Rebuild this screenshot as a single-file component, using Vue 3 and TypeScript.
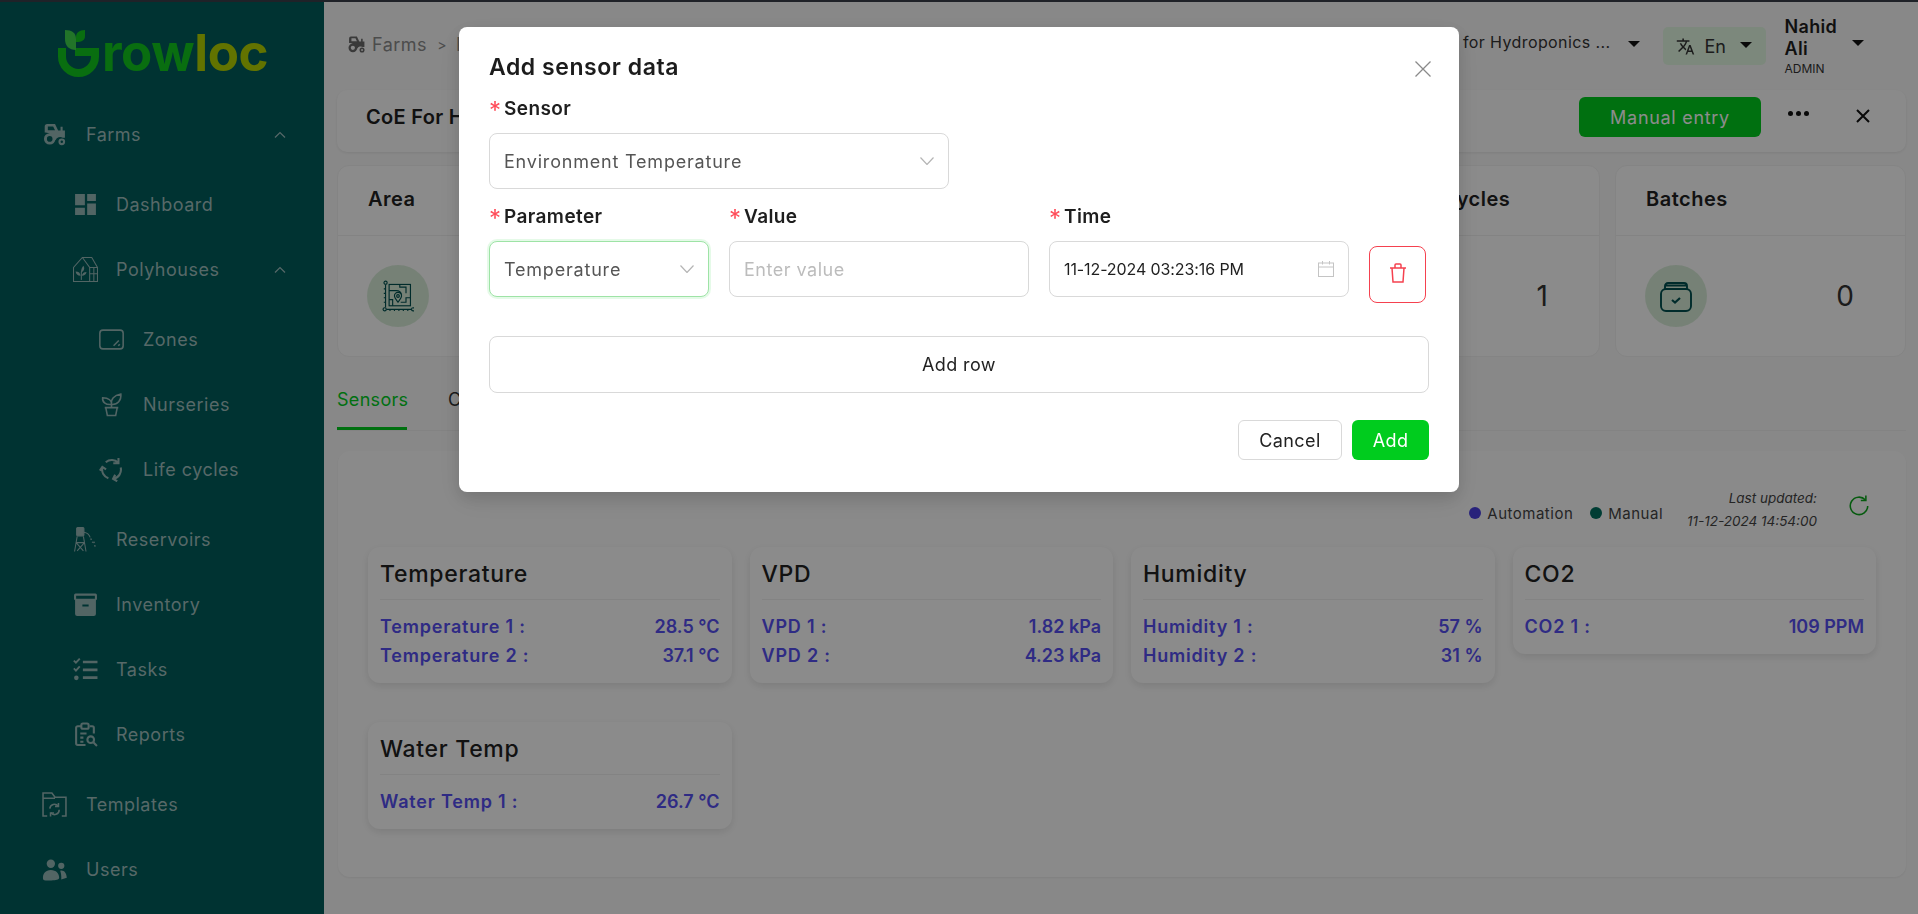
<script setup lang="ts">
interface NavItem {
  label: string
  level: number
  chevron?: boolean
  spaced?: boolean
  icon: string
}

const tractor =
  '<g fill="currentColor"><path d="M5 2h7.5l3 6.2h2.3V4.6h2V8.2h2.2V15h-2.1a5 5 0 0 0-6.9 2.2h-2.2A7.6 7.6 0 0 0 2.6 10V4.4A2.4 2.4 0 0 1 5 2zm.6 2.2V8h6.9l-1.8-3.8z" fill-rule="evenodd"/></g><circle cx="7.4" cy="16.2" r="4.1" fill="none" stroke="currentColor" stroke-width="2.8"/><circle cx="19" cy="19" r="2.2" fill="none" stroke="currentColor" stroke-width="2"/>'

const items: NavItem[] = [
  { label: 'Farms', level: 0, chevron: true, icon: tractor },
  { label: 'Dashboard', level: 1, spaced: true, icon: '<path fill="currentColor" d="M2 12.6h9.4V2H2zM2 22h9.4v-7H2zm11.6 0H22V11h-8.4zm0-20v6.6H22V2z"/>' },
  {
    label: 'Polyhouses',
    level: 1,
    chevron: true,
    icon: '<g fill="none" stroke="currentColor" stroke-width="1"><path d="M.5 23.500V10L9 .5h9l5.500 9.500v13.500z"/><path d="M9 .5l7 9.500v13.500M16 10h7.500M16 16h7.500M20 10v13.500"/></g><g fill="currentColor"><path d="M7.700 15c0-3 1-5 2.300-6.500 1.500 2.500.8 5-2.300 6.500zM7.300 18c-3 0-4.500-1.500-4.800-4 3 0 4.500 1.500 4.800 4zM8.500 18c.3-2 1.700-3.500 4.500-3.500-.5 2.500-2 3.500-4.500 3.500z"/><rect x="7.500" y="14" width="1" height="8"/></g>'
  },
  { label: 'Zones', level: 2, spaced: true, icon: '<g fill="none" stroke="currentColor" stroke-width="1.500"><rect x=".8" y="3" width="22.400" height="18" rx="3"/><path d="M14 18l5-5M18.500 18l1.500-1.500"/></g>' },
  {
    label: 'Nurseries',
    level: 2,
    icon: '<g fill="none" stroke="currentColor" stroke-width="1.500"><path d="M6.500 15h11l-1.500 7.500H8zM5.500 15h13M12 15v-3"/><path d="M12 12c.5-3.500-2.500-6.500-8.500-6.500C3 9.500 6 12.500 12 12zM12 12c-1-5 2.500-9 9-10 .5 6-3 10.500-9 10z"/></g>'
  },
  {
    label: 'Life cycles',
    level: 2,
    icon: '<g fill="none" stroke="currentColor" stroke-width="2"><path d="M6.500 5A9 9 0 0 1 18.500 5.500M18.700 1v5h-5M20.800 10A9 9 0 0 1 14 21M17.500 23.300l-4-2.300 2-4M9 20.500A9 9 0 0 1 3.200 10M.8 13l2.400-3.500L6.800 11.800"/></g>'
  },
  {
    label: 'Reservoirs',
    level: 1,
    spaced: true,
    icon: '<g fill="none" stroke="currentColor" stroke-width="1"><rect x="3.500" y=".5" width="7" height="8" rx="1" fill="currentColor"/><path d="M4 9L1.500 23.500M10 9l2.500 14.500M3 15h8M3 15l7 8M11 15l-7 8M10.500 5c3 .5 5 2 6 5"/><path stroke-dasharray="1.500 2" stroke-width="1.300" d="M17 11l2 4M20 14l1.500 6"/></g>'
  },
  { label: 'Inventory', level: 1, icon: '<path fill="currentColor" d="M2.500 1.500h19A1.500 1.500 0 0 1 23 3v3.500a1.500 1.500 0 0 1-1 1.400V21a2 2 0 0 1-2 2H4a2 2 0 0 1-2-2V7.900a1.500 1.500 0 0 1-1-1.400V3a1.500 1.500 0 0 1 1.500-1.500zM3 3.500v3h18v-3zM9 12v2h6v-2z" fill-rule="evenodd"/>' },
  {
    label: 'Tasks',
    level: 1,
    icon: '<path fill="currentColor" d="M9.500 3.500h14v2.600h-14zM9.500 11h14v2.600h-14zM9.500 18.500h14v2.600h-14z"/><circle cx="3.200" cy="20" r="2.200" fill="currentColor"/><path fill="none" stroke="currentColor" stroke-width="1.800" d="M.8 3.500l2 2L6.500 1.500M.8 11l2 2 3.700-4"/>'
  },
  {
    label: 'Reports',
    level: 1,
    icon: '<g fill="none" stroke="currentColor" stroke-width="2"><path d="M8 4H4.500A1.500 1.500 0 0 0 3 5.500v15A1.500 1.500 0 0 0 4.500 22H12M16 4h2.500A1.500 1.500 0 0 1 20 5.500V11"/><rect x="8" y="1.500" width="7" height="5" rx="1.500"/><path d="M7 11h6M7 15h3M7 19h3"/><circle cx="17" cy="17" r="3.200"/><path d="M19.500 19.500l3.500 3.500"/></g>'
  },
  {
    label: 'Templates',
    level: 0,
    spaced: true,
    icon: '<g fill="none" stroke="currentColor" stroke-width="1.500"><path d="M5 23H1V1h8.500l3 4H23v18h-4M1 6h11.500"/><path d="M7.500 16a4.500 4.500 0 0 1 8-2.500M16.500 17a4.500 4.500 0 0 1-8 3"/><path d="M15.800 10.500v3.300h-3.300M8.200 23.500v-3.300h3.300"/></g>'
  },
  {
    label: 'Users',
    level: 0,
    icon: '<g fill="currentColor"><circle cx="8.500" cy="6.500" r="4"/><circle cx="18.500" cy="8.500" r="3"/><path d="M1 21c-.6-5 2.500-8.500 7.500-8.500s8 3.500 8 7.500c-.2 2-3 2.500-7.500 2.500S1.300 23 1 21z"/><path d="M17.500 13.200c3.500-.800 6 2 6.300 6.800l-5.300 1.500c.2-3-.2-6-1-8.300z"/></g>'
  }
]

const summaryCards = ['Area', 'Polyhouses', 'Zones', 'Total Life cycles', 'Batches']

const sensors = [
  { title: 'Temperature', rows: [['Temperature 1 :', '28.5 °C'], ['Temperature 2 :', '37.1 °C']] },
  { title: 'VPD', rows: [['VPD 1 :', '1.82 kPa'], ['VPD 2 :', '4.23 kPa']] },
  { title: 'Humidity', rows: [['Humidity 1 :', '57 %'], ['Humidity 2 :', '31 %']] },
  { title: 'CO2', rows: [['CO2 1 :', '109 PPM']] },
  { title: 'Water Temp', rows: [['Water Temp 1 :', '26.7 °C']] }
]
</script>

<template>
  <div class="page">
    <aside class="sidebar">
      <div class="logo">
        <svg class="logo-g" viewBox="0 0 41 47">
          <path d="M4 18v8.500a16.500 16.500 0 0 0 33 0V22H17" fill="none" stroke="#12c81e" stroke-width="8" />
          <path d="M7 0c7 0 11 3 11 9v11c-7 0-11-4-11-11z" fill="#3fd34c" />
          <path d="M27 0v6c0 4-3 6-9 6V7c0-4 3-7 9-7z" fill="#12c81e" />
        </svg>
        <span class="logo-text">row<span class="logo-loc">loc</span></span>
      </div>
      <nav class="nav">
        <div v-for="item in items" :key="item.label" class="nav-item" :class="[`level-${item.level}`, { spaced: item.spaced }]">
          <span class="nav-icon"><svg viewBox="0 0 24 24" v-html="item.icon"></svg></span>
          <span class="nav-label">{{ item.label }}</span>
          <svg v-if="item.chevron" class="chev" viewBox="0 0 12 8"><path d="M1 6.500l5-5 5 5" fill="none" stroke="currentColor" stroke-width="1.200" /></svg>
        </div>
      </nav>
    </aside>

    <main class="main">
      <header class="topbar">
        <div class="crumbs">
          <svg class="crumb-icon" viewBox="0 0 24 24" v-html="tractor"></svg>
          <span>Farms</span>
          <span class="sep">&gt;</span>
          <span>Polyhouses</span>
        </div>
        <div class="top-right">
          <span class="farm-name">CoE for Hydroponics ...</span>
          <i class="caret"></i>
          <div class="lang">
            <svg viewBox="0 0 24 24"><path fill="currentColor" d="M12.870 15.070l-2.540-2.510.030-.030c1.740-1.940 2.980-4.170 3.710-6.530H17V4h-7V2H8v2H1v1.990h11.170C11.500 7.920 10.440 9.750 9 11.350 8.070 10.320 7.300 9.190 6.690 8h-2c.730 1.630 1.730 3.170 2.980 4.560l-5.090 5.020L4 19l5-5 3.110 3.110.760-2.040zM18.500 10h-2L12 22h2l1.120-3h4.750L21 22h2l-4.500-12zm-2.620 7l1.620-4.330L19.120 17h-3.240z" /></svg>
            <span>En</span>
            <i class="caret"></i>
          </div>
          <div class="user">
            <div class="user-name">Nahid<br />Ali</div>
            <div class="user-role">ADMIN</div>
          </div>
          <i class="caret user-caret"></i>
        </div>
      </header>

      <section class="titlebar">
        <h1>CoE For Hydroponics</h1>
        <button class="manual">Manual entry</button>
        <span class="dots"><i></i><i></i><i></i></span>
        <svg class="bar-close" viewBox="0 0 16 16"><path d="M2 2l12 12M14 2L2 14" stroke="currentColor" stroke-width="2" /></svg>
      </section>

      <section class="summary">
        <div v-for="(card, i) in summaryCards" :key="card" class="summary-card">
          <div class="summary-head">{{ card }}</div>
          <div class="summary-body">
            <span class="round">
              <svg v-if="card === 'Batches'" viewBox="0 0 32 32" fill="none" stroke="#004f4f" stroke-width="1.900"><rect x="1" y="9" width="30" height="22" rx="5" /><path d="M5 9V6a3 3 0 0 1 3-3h16a3 3 0 0 1 3 3v3M5 5.500h22" /><path d="M12 20l3 2.500 5-4.500" stroke-width="2.200" /></svg>
              <svg v-else viewBox="0 0 36 36" fill="none" stroke="#004f4f" stroke-width="1.300"><circle cx="4" cy="3" r="1.800" /><circle cx="3" cy="33" r="1.800" /><circle cx="35" cy="33" r="1.800" /><path d="M4 5v26M5 33h28" /><path d="M2 10h2M2 15h2M2 20h2M2 25h2M9 35v-2M14 35v-2M19 35v-2M24 35v-2M29 35v-2" /><rect x="8" y="5" width="24" height="24" /><path d="M8 12h8a6 6 0 0 1 6 5M20 5v3h7v7M32 20h-5v5h-6M8 22h4v7" /><path d="M18 25c-3-4-4-5-4-7a4 4 0 0 1 8 0c0 2-1 3-4 7z" fill="#d8ecd8" /><circle cx="18" cy="18" r="1.500" /></svg>
            </span>
            <span class="summary-value">{{ i === 4 ? 0 : 1 }}</span>
          </div>
        </div>
      </section>

      <div class="tabs">
        <span class="tab active">Sensors</span>
        <span class="tab">Crops</span>
      </div>

      <section class="panel">
        <div class="panel-top">
          <span class="legend"><i class="dot auto"></i>Automation</span>
          <span class="legend"><i class="dot man"></i>Manual</span>
          <div class="updated">Last updated:<br />11-12-2024 14:54:00</div>
          <svg class="refresh" viewBox="0 0 24 24" fill="none" stroke="#0ca61c" stroke-width="1.700"><path d="M19 6.500A9.500 9.500 0 1 0 21.500 13" /><path d="M19.500 1.500v5.500H14" /></svg>
        </div>
        <div class="sensor-grid">
          <div v-for="s in sensors" :key="s.title" class="sensor">
            <h3>{{ s.title }}</h3>
            <div v-for="row in s.rows" :key="row[0]" class="sensor-row">
              <span class="sensor-name">{{ row[0] }}</span><span>{{ row[1] }}</span>
            </div>
          </div>
        </div>
      </section>
    </main>

    <div class="overlay"></div>

    <div class="modal">
      <svg class="modal-close" viewBox="0 0 16 16"><path d="M0.500 0.500l15 15M15.500 0.500l-15 15" stroke="#8a8a8a" stroke-width="1.300" /></svg>
      <h2>Add sensor data</h2>
      <label class="field-label sensor-label"><b>*</b>Sensor</label>
      <div class="control sensor-select">
        <span class="sel-text">Environment Temperature</span>
        <svg class="down" viewBox="0 0 14 8"><path d="M.5 .5L7 7.500l6.500-7" fill="none" stroke="#b4b4b4" stroke-width="1.200" /></svg>
      </div>
      <div class="row">
        <div class="col col-param">
          <label class="field-label"><b>*</b>Parameter</label>
          <div class="control focused">
            <span class="sel-text">Temperature</span>
            <svg class="down" viewBox="0 0 14 8"><path d="M.5 .5L7 7.500l6.500-7" fill="none" stroke="#b4b4b4" stroke-width="1.200" /></svg>
          </div>
        </div>
        <div class="col col-wide">
          <label class="field-label"><b>*</b>Value</label>
          <div class="control"><span class="placeholder">Enter value</span></div>
        </div>
        <div class="col col-wide">
          <label class="field-label"><b>*</b>Time</label>
          <div class="control">
            <span class="time-text">11-12-2024 03:23:16 PM</span>
            <svg class="calendar" viewBox="0 0 16 16" fill="none" stroke="#c4c4c4" stroke-width="1"><rect x=".5" y="2" width="15" height="13.500" /><path d="M.5 6h15M4.500 0v3.500M11.500 0v3.500" /></svg>
          </div>
        </div>
        <button class="del">
          <svg viewBox="0 0 18 20" fill="none" stroke="#f5414f" stroke-width="1.500"><path d="M1 5h16M3 5l1 14h10l1-14M6 5V2a1 1 0 0 1 1-1h4a1 1 0 0 1 1 1v3" /></svg>
        </button>
      </div>
      <button class="add-row">Add row</button>
      <div class="modal-foot">
        <button class="btn-cancel">Cancel</button>
        <button class="btn-add">Add</button>
      </div>
    </div>
  </div>
</template>

<style>
html,
body {
  margin: 0;
  overflow: hidden;
}
</style>

<style scoped>
.page {
  display: flex;
  width: 1918px;
  height: 914px;
  box-sizing: border-box;
  border-top: 2px solid #3a3f4a;
  background: #f8f8f8;
  font-family: Inter, "Noto Sans", sans-serif;
  color: #222;
  overflow: hidden;
}

/* sidebar */
.sidebar {
  width: 324px;
  flex: none;
  background: #005d5c;
  color: #9fbfbe;
}
.logo {
  display: flex;
  align-items: flex-end;
  height: 48px;
  padding: 27px 0 0 58px;
}
.logo-g {
  width: 41px;
  height: 47px;
  flex: none;
}
.logo-text {
  font-size: 51px;
  line-height: 48px;
  font-weight: 700;
  color: #12c81e;
  letter-spacing: -0.400px;
  margin-left: 3px;
}
.logo-loc {
  color: #b2d100;
}
.nav {
  padding-top: 25px;
}
.nav-item {
  display: flex;
  align-items: center;
  height: 65px;
  font-size: 18px;
  letter-spacing: 0.500px;
  padding-right: 38px;
}
.nav-item.spaced {
  margin-top: 5px;
}
.nav-item.level-0 {
  padding-left: 42px;
}
.nav-item.level-1 {
  padding-left: 73px;
}
.nav-item.level-2 {
  padding-left: 99px;
}
.nav-icon {
  width: 25px;
  height: 25px;
  flex: none;
  margin-right: 19px;
  color: #96b8b7;
}
.nav-icon svg {
  width: 100%;
  height: 100%;
  display: block;
}
.level-1 .nav-icon {
  margin-right: 18px;
}
.nav-label {
  flex: 1;
}
.chev {
  width: 12px;
  height: 8px;
}

/* main column */
.main {
  flex: 1;
  min-width: 0;
  padding: 0 12px 0 13px;
}
.topbar {
  display: flex;
  justify-content: space-between;
  align-items: center;
  height: 82px;
  padding: 6px 0 0 10px;
  box-sizing: border-box;
}
.crumbs {
  display: flex;
  align-items: center;
  margin-bottom: 4px;
  font-size: 18px;
  color: #8b8b8b;
  letter-spacing: 0.500px;
}
.crumb-icon {
  width: 19px;
  height: 19px;
  margin-right: 6px;
  color: #6a6a6a;
}
.sep {
  margin: 0 9px 0 10px;
  font-size: 14px;
}
.top-right {
  display: flex;
  align-items: center;
  font-size: 16px;
  color: #333;
  padding-right: 42px;
}
.farm-name {
  letter-spacing: 0.400px;
  margin-bottom: 9px;
}
.caret {
  display: inline-block;
  width: 0;
  height: 0;
  border-left: 6px solid transparent;
  border-right: 6px solid transparent;
  border-top: 6px solid #111;
}
.top-right > .caret:nth-child(2) {
  margin: 0 23px 5px 17px;
}
.user-caret {
  margin-bottom: 6px;
}
.lang {
  display: flex;
  align-items: center;
  width: 103px;
  height: 38px;
  box-sizing: border-box;
  padding-left: 13px;
  background: #e2f7e2;
  border-radius: 5px;
  font-size: 18px;
}
.lang svg {
  width: 19px;
  height: 19px;
  margin-right: 10px;
}
.lang .caret {
  margin: 0 0 3px 14px;
}
.user {
  margin: 0 15px 0 19px;
}
.user-name {
  font-size: 18px;
  font-weight: 600;
  line-height: 22px;
  letter-spacing: 0.300px;
  color: #1e1e1e;
}
.user-role {
  font-size: 12px;
  line-height: 14px;
  margin-top: 2px;
}

.titlebar {
  display: flex;
  align-items: center;
  height: 62px;
  margin-top: 6px;
  padding: 0 35px 8px 29px;
  box-sizing: border-box;
  background: #fbfbfb;
  border-radius: 10px;
  box-shadow: 0 1px 3px rgba(0, 0, 0, 0.08);
}
.titlebar h1 {
  flex: 1;
  margin: 0;
  font-size: 20px;
  font-weight: 600;
  letter-spacing: 0.300px;
  color: #202020;
}
.manual {
  width: 182px;
  height: 40px;
  border: 0;
  border-radius: 6px;
  background: #00cc1e;
  color: #fff;
  font: inherit;
  font-size: 18px;
  letter-spacing: 0.700px;
}
.dots {
  display: flex;
  gap: 3px;
  margin: 0 46px 8px 27px;
}
.dots i {
  width: 5px;
  height: 5px;
  border-radius: 50%;
  background: #111;
}
.bar-close {
  width: 16px;
  height: 16px;
  margin-bottom: 2px;
  color: #111;
}

.summary {
  display: flex;
  gap: 15px;
  margin-top: 13px;
}
.summary-card {
  flex: 1;
  height: 192px;
  box-sizing: border-box;
  border: 1px solid #f1f1f1;
  border-radius: 12px;
  background: #fdfdfd;
}
.summary-card:nth-child(4) {
  flex: none;
  width: 285px;
}
.summary-card:last-child {
  flex: none;
  width: 291px;
}
.summary-head {
  height: 70px;
  line-height: 67px;
  padding-left: 30px;
  box-sizing: border-box;
  border-bottom: 1px solid #eee;
  font-size: 20px;
  font-weight: 600;
  letter-spacing: 0.500px;
  color: #222;
}
.summary-body {
  display: flex;
  align-items: center;
  justify-content: space-between;
  height: 120px;
  padding: 0 51px 0 29px;
}
.round {
  display: flex;
  align-items: center;
  justify-content: center;
  width: 62px;
  height: 62px;
  border-radius: 50%;
  background: #d8ecd8;
}
.round svg {
  width: 32px;
  height: 32px;
}
.summary-value {
  font-size: 28px;
  color: #333;
}

.tabs {
  display: flex;
  gap: 41px;
  height: 74px;
  box-sizing: border-box;
  padding-top: 32px;
  border-bottom: 1px solid #eee;
  font-size: 18px;
  letter-spacing: 0.300px;
  color: #333;
}
.tab.active {
  height: 41px;
  width: 70px;
  box-sizing: border-box;
  border-bottom: 3px solid #00cc1e;
  color: #00cc1e;
}

.panel {
  height: 426px;
  margin: 20px 0 0 1px;
  box-sizing: border-box;
  padding: 35px 30px 0 30px;
  background: #fcfcfc;
  border-radius: 12px;
  box-shadow: 0 1px 2px rgba(0, 0, 0, 0.06);
}
.panel-top {
  display: flex;
  align-items: center;
  justify-content: flex-end;
  height: 48px;
  padding-right: 6px;
}
.legend {
  display: flex;
  align-items: center;
  font-size: 15px;
  letter-spacing: 0.500px;
  color: #444;
  margin: 6px 17px 0 0;
}
.dot {
  width: 12px;
  height: 12px;
  border-radius: 50%;
  margin-right: 6px;
}
.dot.auto {
  background: #4a3fe0;
}
.dot.man {
  background: #007060;
}
.updated {
  text-align: right;
  font-size: 13.500px;
  font-style: italic;
  line-height: 23px;
  color: #444;
  margin-left: 7px;
}
.refresh {
  width: 22px;
  height: 22px;
  margin-left: 31px;
  margin-bottom: 10px;
}
.sensor-grid {
  display: grid;
  grid-template-columns: repeat(4, 1fr);
  column-gap: 18px;
  row-gap: 39px;
  margin-top: 13px;
  align-items: start;
}
.sensor {
  padding: 0 12px 13px;
  background: #fdfdfd;
  border-radius: 12px;
  box-shadow: 0 3px 9px rgba(0, 0, 0, 0.1);
  font-size: 18px;
}
.sensor h3 {
  margin: 0 0 12px;
  height: 52px;
  line-height: 54px;
  border-bottom: 1px solid #eee;
  font-size: 23px;
  font-weight: 500;
  letter-spacing: 0.700px;
  color: #222;
}
.sensor-row {
  display: flex;
  justify-content: space-between;
  height: 29px;
  line-height: 29px;
  font-weight: 600;
  color: #564ff0;
}
.sensor-name {
  letter-spacing: 0.800px;
}

/* modal */
.overlay {
  position: fixed;
  inset: 0;
  background: rgba(0, 0, 0, 0.45);
}
.modal {
  position: fixed;
  top: 27px;
  left: 459px;
  width: 1000px;
  height: 465px;
  box-sizing: border-box;
  padding: 0 30px 0 30px;
  background: #fff;
  border-radius: 8px;
  box-shadow: 0 6px 16px rgba(0, 0, 0, 0.12), 0 9px 28px rgba(0, 0, 0, 0.08);
}
.modal h2 {
  margin: 0;
  padding-top: 23px;
  height: 67px;
  box-sizing: border-box;
  line-height: 34px;
  font-size: 23px;
  font-weight: 600;
  letter-spacing: 0.550px;
  color: #1c1c1c;
}
.modal-close {
  position: absolute;
  top: 34px;
  left: 956px;
  width: 16px;
  height: 16px;
}
.field-label {
  display: block;
  height: 39px;
  line-height: 29px;
  font-size: 19px;
  font-weight: 600;
  letter-spacing: 0.400px;
  color: #1e1e1e;
}
.field-label b {
  display: inline-block;
  width: 15px;
  height: 20px;
  font-size: 24px;
  line-height: 26px;
  font-weight: 400;
  letter-spacing: 0;
  vertical-align: -4px;
  color: #ff4d5a;
}
.control {
  display: flex;
  align-items: center;
  height: 56px;
  box-sizing: border-box;
  padding: 0 14px;
  border: 1px solid #d9d9d9;
  border-radius: 8px;
  background: #fff;
}
.sensor-select {
  width: 460px;
  margin-top: 0;
}
.focused {
  border-color: #9ee3a6;
  box-shadow: 0 0 0 2px rgba(0, 204, 30, 0.1);
}
.sel-text {
  flex: 1;
  font-size: 18px;
  letter-spacing: 0.800px;
  color: #555;
}
.down {
  width: 14px;
  height: 8px;
}
.placeholder {
  font-size: 18px;
  letter-spacing: 0.500px;
  color: #bcbcbc;
}
.time-text {
  flex: 1;
  font-size: 16px;
  letter-spacing: -0.100px;
  color: #1f1f1f;
}
.calendar {
  width: 16px;
  height: 16px;
}
.row {
  display: flex;
  gap: 20px;
  margin-top: 13px;
}
.col-param {
  width: 220px;
}
.col-wide {
  width: 300px;
}
.del {
  width: 57px;
  height: 57px;
  margin-top: 44px;
  padding: 0;
  border: 1px solid #f5414f;
  border-radius: 8px;
  background: #fff;
}
.del svg {
  width: 18px;
  height: 20px;
}
.add-row {
  display: block;
  width: 940px;
  height: 57px;
  margin-top: 33px;
  border: 1px solid #d9d9d9;
  border-radius: 8px;
  background: #fff;
  font: inherit;
  font-size: 18px;
  letter-spacing: 0.400px;
  color: #222;
}
.modal-foot {
  display: flex;
  justify-content: flex-end;
  gap: 10px;
  margin-top: 27px;
}
.btn-cancel,
.btn-add {
  height: 40px;
  border-radius: 6px;
  font: inherit;
  font-size: 18px;
  letter-spacing: 0.400px;
}
.btn-cancel {
  width: 104px;
  border: 1px solid #d9d9d9;
  background: #fff;
  color: #222;
}
.btn-add {
  width: 77px;
  border: 0;
  background: #00cc1e;
  color: #fff;
}
</style>
